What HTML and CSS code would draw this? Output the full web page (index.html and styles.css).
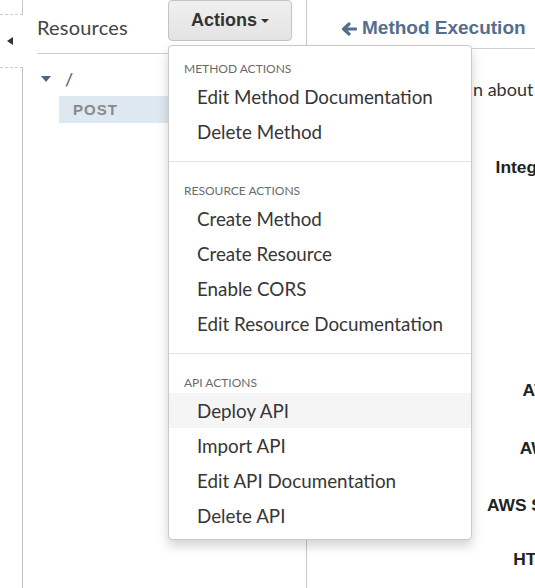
FILE: index.html
```html
<!DOCTYPE html>
<html>
<head>
<meta charset="utf-8">
<link rel="stylesheet" href="styles.css">
</head>
<body>
<div class="app">
  <aside class="rail">
    <div class="rail-top"></div>
    <div class="rail-toggle"><span class="tri-left"></span></div>
    <div class="rail-bottom"></div>
  </aside>
  <section class="sidebar">
    <header class="side-head">
      <h2 class="side-title">Resources</h2>
      <button class="actions-btn">Actions<span class="caret"></span></button>
    </header>
    <ul class="tree">
      <li class="tree-root"><span class="tri-down"></span><span class="slash">/</span></li>
      <li class="tree-method">POST</li>
    </ul>
  </section>
  <main class="main">
    <header class="main-head">
      <a class="back"><svg class="back-icon" viewBox="0 0 16 14" width="16" height="14"><path d="M8 2 L2.6 7 L8 12 M3.2 7 H14.6" fill="none" stroke="#546e8c" stroke-width="3.2" stroke-linecap="round" stroke-linejoin="round"/></svg>Method Execution</a>
    </header>
    <p class="desc">n about this method</p>
    <div class="form">
      <div class="row row-int"><span class="lbl">Integration type</span></div>
      <div class="row row-region"><span class="lbl">AWS Region</span></div>
      <div class="row row-service"><span class="lbl">AWS Service</span></div>
      <div class="row row-sub"><span class="lbl">AWS Subdomain</span></div>
      <div class="row row-http"><span class="lbl">HTTP method</span></div>
    </div>
  </main>
  <div class="menu">
    <div class="menu-section">
      <div class="menu-head">Method Actions</div>
      <div class="menu-item">Edit Method Documentation</div>
      <div class="menu-item">Delete Method</div>
    </div>
    <div class="menu-divider"></div>
    <div class="menu-section">
      <div class="menu-head">Resource Actions</div>
      <div class="menu-item">Create Method</div>
      <div class="menu-item">Create Resource</div>
      <div class="menu-item">Enable CORS</div>
      <div class="menu-item">Edit Resource Documentation</div>
    </div>
    <div class="menu-divider"></div>
    <div class="menu-section">
      <div class="menu-head">API Actions</div>
      <div class="menu-item is-hover">Deploy API</div>
      <div class="menu-item">Import API</div>
      <div class="menu-item">Edit API Documentation</div>
      <div class="menu-item">Delete API</div>
    </div>
  </div>
</div>
</body>
</html>
```

FILE: styles.css
```css
* { box-sizing: border-box; }
html, body { margin: 0; padding: 0; }
body {
  width: 535px;
  height: 588px;
  overflow: hidden;
  background: #fff;
  font-family: Lato, "Open Sans", sans-serif;
  color: #333;
}
.app {
  position: relative;
  display: flex;
  width: 535px;
  height: 588px;
  overflow: hidden;
}

/* left rail */
.rail {
  width: 23px;
  flex: 0 0 23px;
  display: flex;
  flex-direction: column;
}
.rail-top {
  height: 15px;
  border-right: 1px solid #c8c8c8;
  border-bottom: 1px dashed #cfcfcf;
}
.rail-toggle {
  height: 52px;
  display: flex;
  align-items: center;
  padding-left: 7px;
  padding-top: 0;
}
.tri-left {
  width: 0; height: 0;
  border-top: 4px solid transparent;
  border-bottom: 4px solid transparent;
  border-right: 6px solid #333;
}
.rail-bottom {
  flex: 1;
  border-top: 1px dashed #cfcfcf;
  border-right: 1px solid #c0c0c0;
}

/* sidebar */
.sidebar {
  width: 284px;
  flex: 0 0 284px;
  border-right: 1px solid #c8c8c8;
}
.side-head {
  display: flex;
  align-items: flex-start;
  margin-left: 14px;
  height: 54px;
  border-bottom: 1px solid #cfcfcf;
}
.side-title {
  width: 131px;
  margin: 0;
  padding-top: 15px;
  font-size: 20px;
  line-height: 24px;
  font-weight: 400;
  letter-spacing: 0.2px;
  color: #444;
}
.actions-btn {
  width: 124px;
  height: 41px;
  margin: 0;
  padding: 0;
  border: 1px solid #c4c4c4;
  border-radius: 4px;
  background: linear-gradient(#f0f0f0, #e3e3e3);
  font-family: "Liberation Sans", Arial, sans-serif;
  font-weight: 700;
  font-size: 18px;
  line-height: 39px;
  color: #333;
  text-align: center;
}
.caret {
  display: inline-block;
  width: 0; height: 0;
  margin-left: 4px;
  vertical-align: middle;
  border-top: 4px solid #333;
  border-left: 4px solid transparent;
  border-right: 4px solid transparent;
}

.tree {
  list-style: none;
  margin: 0;
  padding: 0;
}
.tree-root {
  display: flex;
  align-items: center;
  height: 42px;
  padding-left: 18px;
  padding-top: 8px;
}
.tri-down {
  width: 0; height: 0;
  border-left: 5px solid transparent;
  border-right: 5px solid transparent;
  border-top: 6px solid #4e6584;
}
.slash {
  margin-left: 14px;
  font-size: 18px;
  line-height: 24px;
  color: #555;
}
.tree-method {
  margin-left: 36px;
  height: 27px;
  padding-left: 14px;
  background: #dde8f1;
  font-family: "Liberation Sans", Arial, sans-serif;
  font-weight: 700;
  font-size: 15px;
  line-height: 27px;
  letter-spacing: 1px;
  color: #8a8a8a;
}

/* main panel */
.main {
  flex: 1;
  min-width: 0;
  white-space: nowrap;
}
.main-head {
  margin-left: 26px;
  height: 49px;
  padding-top: 16px;
  padding-left: 8px;
  border-bottom: 1px solid #cfcfcf;
}
.back {
  display: flex;
  align-items: center;
  font-family: "Liberation Sans", Arial, sans-serif;
  font-weight: 700;
  font-size: 19px;
  line-height: 24px;
  color: #546e8c;
}
.back-icon {
  margin-right: 5px;
  margin-top: 1px;
}
.desc {
  margin: 28px 0 0;
  padding-left: 166px;
  font-size: 18px;
  line-height: 24px;
  color: #333;
}
.form {
  font-family: "Liberation Sans", Arial, sans-serif;
  font-weight: 700;
  font-size: 17.4px;
  line-height: 24px;
  color: #222;
}
.row { height: 24px; }
.lbl {
  display: block;
  width: 319px;
  text-align: right;
}
.row-int { margin-top: 54px; }
.row-region { margin-top: 199px; }
.row-service { margin-top: 34px; }
.row-sub { margin-top: 33px; }
.row-http { margin-top: 30px; }

/* dropdown menu */
.menu {
  position: absolute;
  left: 168px;
  top: 45px;
  width: 304px;
  padding: 13px 0 6px;
  background: #fff;
  border: 1px solid #c9c9c9;
  border-radius: 4px;
  box-shadow: 0 6px 12px rgba(0,0,0,0.175);
}
.menu-head {
  height: 20px;
  padding-left: 15px;
  font-size: 12px;
  line-height: 20px;
  text-transform: uppercase;
  color: #6b6b6b;
}
.menu-item {
  height: 35px;
  padding-left: 28px;
  font-size: 18.8px;
  line-height: 35px;
  color: #363636;
}
.menu-item.is-hover { background: #f5f5f5; }
.menu-divider {
  height: 1px;
  margin: 12px 0 19px;
  background: #e3e3e3;
}
```
